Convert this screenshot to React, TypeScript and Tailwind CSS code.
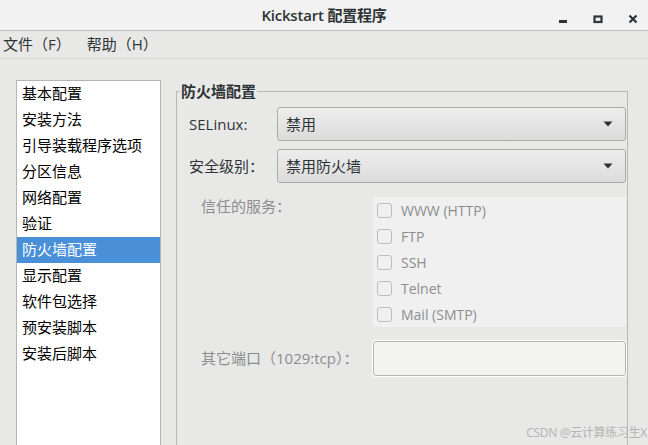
import React from "react";

const CJK = '"Open Sans", "Noto Sans CJK SC", sans-serif';

const sections = [
  "基本配置",
  "安装方法",
  "引导装载程序选项",
  "分区信息",
  "网络配置",
  "验证",
  "防火墙配置",
  "显示配置",
  "软件包选择",
  "预安装脚本",
  "安装后脚本",
];

const services = ["WWW (HTTP)", "FTP", "SSH", "Telnet", "Mail (SMTP)"];

function Caret() {
  return (
    <svg width="10" height="6" viewBox="0 0 10 6" className="shrink-0">
      <path d="M0.5 0.5 H9.5 L5 5.5 Z" fill="#2e3436" />
    </svg>
  );
}

function Combo({ value }: { value: string }) {
  return (
    <div className="flex-1 h-[34px] flex items-center justify-between pl-[8px] pr-[12px] rounded-[3px] border border-[#ababab] bg-gradient-to-b from-[#ededed] to-[#dcdcdc] text-[15px] text-[#2e3436]">
      <span>{value}</span>
      <Caret />
    </div>
  );
}

function WindowButtons() {
  return (
    <div className="flex items-center gap-[25px] pr-[10px]">
      <svg width="10" height="18" viewBox="0 0 10 18">
        <rect x="1" y="14" width="8" height="3" fill="#2e3436" />
      </svg>
      <svg width="10" height="18" viewBox="0 0 10 18">
        <rect x="1.5" y="10.5" width="7" height="5.5" fill="none" stroke="#2e3436" strokeWidth="2.2" />
      </svg>
      <svg width="10" height="18" viewBox="0 0 10 18">
        <path d="M1.5 9.5 L8.5 16.5 M8.5 9.5 L1.5 16.5" stroke="#2e3436" strokeWidth="2.2" />
      </svg>
    </div>
  );
}

export default function App() {
  return (
    <div
      className="relative w-[648px] h-[445px] overflow-hidden bg-[#e8e8e7] flex flex-col"
      style={{ fontFamily: CJK }}
    >
      {/* title bar */}
      <div className="h-[31px] shrink-0 grid grid-cols-[1fr_auto_1fr] items-center bg-[#f2f2f2] border-b border-[#bfbfbf]">
        <div />
        <div className="text-[15px] font-semibold text-[#2e3436] tracking-[-0.2px]">
          Kickstart 配置程序
        </div>
        <div className="flex justify-end">
          <WindowButtons />
        </div>
      </div>

      {/* menu bar */}
      <div className="h-[28px] shrink-0 flex items-center gap-[16px] pl-[3px] border-b border-[#d6d6d5] text-[15px] text-[#2e3436]">
        <span>文件（F）</span>
        <span>帮助（H）</span>
      </div>

      {/* body */}
      <div className="flex-1 flex items-start pl-[16px] pt-[21px] gap-[15px]">
        {/* section list */}
        <div className="w-[145px] h-[400px] shrink-0 border border-[#b5b5b5] bg-white pt-[-1px]">
          {sections.map((s) => {
            const active = s === "防火墙配置";
            return (
              <div
                key={s}
                className={
                  "h-[26px] flex items-center pl-[5px] pb-[2px] text-[15px] " +
                  (active ? "bg-[#4a90d9] text-white" : "text-black")
                }
              >
                {s}
              </div>
            );
          })}
        </div>

        {/* firewall frame */}
        <fieldset className="w-[452px] h-[400px] mt-[1px] shrink-0 border border-[#b8b8b8] pl-[12px] pr-[1px]">
          <legend className="ml-[-9px] px-[1px] text-[15px] font-bold text-[#2e3436] leading-[20px]">
            防火墙配置
          </legend>

          <div className="flex items-center mt-[6px]">
            <span className="w-[88px] text-[15px] text-[#2e3436]">SELinux:</span>
            <Combo value="禁用" />
          </div>

          <div className="flex items-center mt-[8px]">
            <span className="w-[88px] text-[15px] text-[#2e3436]">安全级别：</span>
            <Combo value="禁用防火墙" />
          </div>

          <div className="flex items-start mt-[14px]">
            <span className="w-[184px] pl-[12px] text-[15px] leading-[18px] text-[#8b8e8f]">
              信任的服务：
            </span>
            <div className="flex-1 bg-[#f0f0f0] flex flex-col">
              {services.map((s) => (
                <div key={s} className="h-[26px] flex items-center gap-[9px] pl-[4px]">
                  <span className="w-[15px] h-[15px] rounded-[3px] border border-[#bdbdbd] bg-[#f0f0f0]" />
                  <span className="text-[14px] text-[#8b8e8f]">{s}</span>
                </div>
              ))}
            </div>
          </div>

          <div className="flex items-center mt-[14px]">
            <span className="w-[184px] pl-[12px] text-[15px] text-[#8b8e8f]">
              其它端口（1029:tcp）：
            </span>
            <div className="flex-1 h-[35px] rounded-[3px] border border-[#b5b5b5] bg-[#f3f3f2] shadow-[0_0_0_1px_#ffffff]" />
          </div>
        </fieldset>
      </div>

      <div className="absolute right-[1px] bottom-[3px] text-[12px] text-[#b4b4b4] tracking-[-0.3px]">
        CSDN @云计算练习生X
      </div>
    </div>
  );
}
